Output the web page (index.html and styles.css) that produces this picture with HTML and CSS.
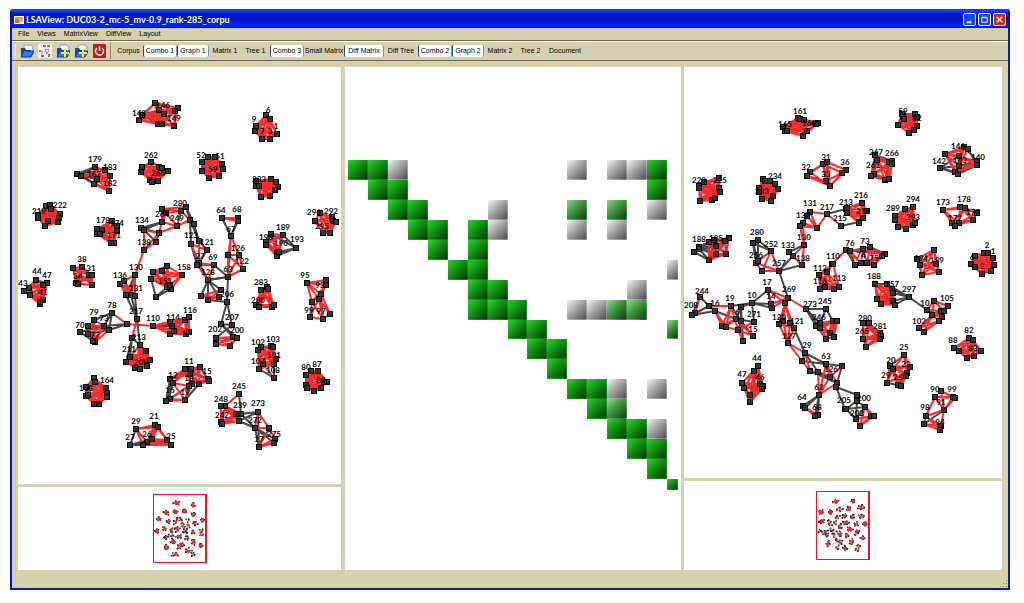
FILE: index.html
```
<!DOCTYPE html>
<html lang="en">
<head>
<meta charset="utf-8">
<meta name="viewport" content="width=device-width, initial-scale=1">
<title>LSAView</title>
<link rel="stylesheet" href="styles.css">
</head>
<body>
<svg class="defs" aria-hidden="true">
  <symbol id="folder" viewBox="0 0 14 14">
    <path d="M4 1h7l2 2v6H4z" fill="#f4f8ff" stroke="#8a9cc0" stroke-width="1"/>
    <path d="M1 4h4l1 2h5v7H1z" fill="#1248b0"/>
    <path d="M1 13l3-6h10l-3 6z" fill="#2f7cf0" stroke="#0a3594" stroke-width="1"/>
  </symbol>
  <symbol id="plus" viewBox="0 0 14 14">
    <path d="M9 5v8M5 9h8" stroke="#ffee00" stroke-width="2"/>
  </symbol>
</svg>
<div class="window">
  <header class="titlebar">
    <svg class="app-icon" viewBox="0 0 10 8" aria-hidden="true"><path d="M0 0h10v8H0z" fill="#fff"/><path d="M1 1h8v2H1z" fill="#ff9a2a"/><path d="M1 3h4v4H1z" fill="#e8641a"/><path d="M5 3h4v3H5z" fill="#f7b46a"/></svg>
    <h1 class="title">LSAView: DUC03-2_mc-5_mv-0.9_rank-285_corpu</h1>
    <div class="controls">
      <button class="control" aria-label="Minimize"><svg viewBox="0 0 12 12"><path d="M3 8h5v2H3z" fill="#fff"/></svg></button>
      <button class="control" aria-label="Maximize"><svg viewBox="0 0 12 12"><path d="M3 4h6v5H3z" fill="none" stroke="#fff"/><path d="M3 3h6v1H3z" fill="#fff"/></svg></button>
      <button class="control close" aria-label="Close"><svg viewBox="0 0 12 12"><path d="M3 3l6 6M9 3l-6 6" stroke="#fff" stroke-width="1.5"/></svg></button>
    </div>
  </header>
  <nav class="menubar" aria-label="Menu">
    <button class="menu">File</button><button class="menu">Views</button><button class="menu">MatrixView</button><button class="menu">DiffView</button><button class="menu">Layout</button>
  </nav>
  <div class="toolbar" role="toolbar" aria-label="Tools">
    <span class="grip"></span>
    <button class="tool" aria-label="Open"><svg viewBox="0 0 14 14"><use href="#folder"/></svg></button>
    <button class="tool" aria-label="Graph"><svg viewBox="0 0 14 14"><path d="M0 0h14v14H0z" fill="#f4f2ea"/><path d="M5 1h3v2H5zM9 1h3v2H9zM1 6h2v2H1zM3 11h3v2H3zM10 10h2v3h-2z" fill="#777"/><path d="M7 5l4 1-2 4zM4 7v4" fill="none" stroke="#e06a70"/></svg></button>
    <button class="tool" aria-label="Add corpus"><svg viewBox="0 0 14 14"><use href="#folder"/><use href="#plus"/></svg></button>
    <button class="tool" aria-label="Add matrix"><svg viewBox="0 0 14 14"><use href="#folder"/><use href="#plus"/></svg></button>
    <button class="tool" aria-label="Exit"><svg viewBox="0 0 14 14"><rect x="1" y="0" width="13" height="14" rx="1" fill="#c4161c"/><path d="M5 4a4 4 0 1 0 5 0" fill="none" stroke="#fff" stroke-width="1.5"/><path d="M7.500 2v5" stroke="#fff" stroke-width="1.5"/></svg></button>
    <span class="divider"></span>
    <button class="toggle xs">Corpus</button>
    <button class="toggle md on">Combo 1</button>
    <button class="toggle sm on">Graph 1</button>
    <button class="toggle sm">Matrix 1</button>
    <button class="toggle xs">Tree 1</button>
    <button class="toggle md on">Combo 3</button>
    <button class="toggle lg">Small Matrix</button>
    <button class="toggle lg on">Diff Matrix</button>
    <button class="toggle md">Diff Tree</button>
    <button class="toggle md on">Combo 2</button>
    <button class="toggle sm on">Graph 2</button>
    <button class="toggle sm">Matrix 2</button>
    <button class="toggle xs">Tree 2</button>
    <button class="toggle lg">Document</button>
  </div>
  <main class="workspace">
    <section class="column column-first" aria-label="Graph 1">
      <div class="pane"><svg class="graph" id="graph1" viewBox="0 0 323 417"></svg></div>
      <div class="pane overview"><svg class="minimap" id="map1" viewBox="0 0 323 417" preserveAspectRatio="none"></svg></div>
    </section>
    <section class="pane matrix-pane" aria-label="Diff Matrix"><div class="matrix" id="matrix"></div></section>
    <section class="column column-last" aria-label="Graph 2">
      <div class="pane"><svg class="graph" id="graph2" viewBox="0 0 318 411"></svg></div>
      <div class="pane overview"><svg class="minimap" id="map2" viewBox="0 0 318 411" preserveAspectRatio="none"></svg></div>
    </section>
  </main>
  <footer class="statusbar"><svg class="resize" viewBox="0 0 9 9" aria-hidden="true"><path d="M7 1h1v1H7zM4 4h1v1H4zM7 4h1v1H7zM1 7h1v1H1zM4 7h1v1H4zM7 7h1v1H7z" fill="#8f8a6c"/></svg></footer>
</div>
<script src="graph.js"></script>
</body>
</html>
```
FILE: styles.css
```
* { box-sizing: border-box; }
body {
  margin: 0;
  height: 100vh;
  padding: 9px 14px 13px 10px;
  background: #fff;
  color: #000;
  font-family: "Liberation Sans", Arial, sans-serif;
  font-size: 7px;
  line-height: 10px;
}
button { margin: 0; padding: 0; border: 0; background: none; color: inherit; font: inherit; white-space: nowrap; }
.defs { position: absolute; width: 0; height: 0; }
.window {
  display: flex;
  flex-direction: column;
  height: 100%;
  min-height: 400px;
  border: 2px solid #0b16b8;
  border-top: 0;
  border-radius: 3px 3px 0 0;
  background: #d6d0ae;
  overflow: hidden;
}
.titlebar {
  display: flex;
  align-items: center;
  gap: 2px;
  height: 19px;
  padding: 2px 2px 0;
  background: linear-gradient(#0a3fd8 0, #0a4cf0 2px, #0016c0 5px, #0018d0 11px, #0028ff 17px, #0010a0 19px);
}
.app-icon { width: 10px; height: 8px; }
.title { flex: 1; margin: 0; color: #fff; font-family: Lato, "Liberation Sans", sans-serif; font-size: 9px; line-height: 12px; font-weight: bold; white-space: nowrap; overflow: hidden; }
.controls { display: flex; gap: 2px; }
.control { width: 13px; height: 13px; border: 1px solid #fff; border-radius: 2px; background: #1c46e0; }
.control svg { display: block; width: 11px; height: 11px; }
.close { background: #d02a14; }
.menubar { display: flex; align-items: center; gap: 8px; height: 13px; padding: 0 6px; border-bottom: 1px solid #6c6653; }
.toolbar {
  display: flex;
  align-items: center;
  height: 20px;
  padding-left: 3px;
  border-top: 1px solid #fff;
  border-bottom: 1px solid #6c6653;
}
.grip { width: 2px; height: 14px; margin-right: 3px; border-left: 1px dotted #fff; }
.tool { width: 14px; height: 14px; margin-right: 4px; }
.tool svg { display: block; width: 14px; height: 14px; }
.divider { width: 1px; height: 16px; margin-right: 3px; background: #8f8a6c; }
.toggle { height: 12px; border-radius: 2px; overflow: hidden; }
.on { background: #fff; border-left: 1px solid #1d4f80; border-right: 1px solid #6f93b5; }
.xs { width: 29px; }
.sm { width: 32px; }
.md { width: 34px; }
.lg { width: 40px; }
.workspace {
  flex: 1;
  min-height: 0;
  display: grid;
  grid-template-columns: 323fr 337fr 318fr;
  gap: 3px;
  padding: 6px 6px 0;
}
.column { display: grid; gap: 3px; min-height: 0; min-width: 0; }
.column-first { grid-template-rows: 417fr 83fr; }
.column-last { grid-template-rows: 411fr 89fr; }
.pane { min-width: 0; min-height: 0; background: #fff; overflow: hidden; }
.graph { display: block; width: 100%; height: 100%; }
.overview { display: flex; align-items: center; justify-content: center; }
.minimap { width: 54px; height: 69px; border: 1px solid #f01030; border-right-width: 2px; }
.minimap .node { stroke-width: 4; }
.edge-strong { fill: none; stroke: #ff2a2a; stroke-width: 2; }
.edge-weak { fill: none; stroke: #484848; stroke-width: 2; }
.node { fill: #363636; stroke: #000; stroke-width: 1; }
.label { fill: #000; font: bold 8px Lato, "Liberation Sans", sans-serif; text-anchor: middle; }
.matrix-pane { margin-left: 1px; padding: 93px 3px 0; }
.matrix {
  display: grid;
  grid-template-columns: repeat(16, 20fr) 11fr;
  grid-template-rows: repeat(16, 20fr) 11fr;
  aspect-ratio: 1;
}
.cell { min-width: 0; min-height: 0; border-right: 1px solid #0003; border-bottom: 1px solid #0003; }
.strong { background: linear-gradient(135deg, #25d525, #18a018 35%, #073a07); }
.medium { background: linear-gradient(135deg, #90dc90, #3f983f 45%, #104010); }
.weak { background: linear-gradient(135deg, #f4f4f4, #a8a8a8 45%, #505050); }
.statusbar { display: flex; justify-content: flex-end; align-items: flex-end; height: 18px; }
.resize { width: 9px; height: 9px; }
```
FILE: graph.js
```
// Each cluster: nodes | strong links | weak links | labels.
// "*" links every pair, "*a-b" links every pair in that index range.
// Coordinates are thirds of a pixel from the origin of the cluster's quadrant.
const firstGraph = [
  [0, 0, [
    "417,111 485,126 477,135 429,132 377,147 369,162 444,143 426,173 439,174 475,181|*|5-6 4-7 5-8 4-3|146@442,117 149@474,157 148@368,142",
    "237,302 182,324 196,330 268,312 283,329 243,339 233,354 279,375|*|1-0 1-6 2-5 2-6 1-2 2-0 1-5 1-7 1-3 1-4 2-7|179@237,278 183@281,303 167@234,323 182@281,352",
    "404,289 379,303 374,317 430,302 439,305 456,315 401,343 408,348 427,346|*||262@404,267 266@427,322",
    "89,419 102,417 105,429 66,447 66,455 132,443 129,455 126,468 97,465 87,481|*||222@131,418 219@68,436",
    "288,465 303,481 303,494 242,489 258,493 243,503 252,503 285,530 294,531|*||178@260,461 174@302,470 171@293,508",
    "375,486 383,492 429,501 420,529 384,552 437,429 450,440 439,469 482,481 494,434 510,423 521,462 535,473 357,627|1-4 1-2 4-2 4-3 7-5 5-10 6-9 7-8 8-11 5-9 6-8 7-6 7-2 8-9 2-8 9-11 4-13|0-7 0-2 1-3 2-3 1-7 10-11 10-12|134@377,462 138@384,528 280@492,411 264@439,445 249@482,457"
  ]],
  [492, 0, [
    "258,147 271,159 227,180 224,196 291,203 246,218 271,218|*||6@265,133 9@223,160 7@247,195 3@271,195 1@289,181",
    "84,272 106,272 66,288 126,294 130,308 66,316 88,336 117,330|*||52@63,267 51@121,269 59@99,308",
    "229,346 272,340 228,360 237,360 287,347 293,363 286,372 243,393 271,390|*||233@236,338",
    "404,464 421,440 455,452 458,464 468,468 430,502 450,500|*||296@402,439 292@452,435 295@426,479",
    "273,504 308,507 257,527 257,537 290,562 291,570 298,557 349,545|*0-6|1-7 4-7 5-7 6-7 0-7|189@308,483 193@350,520 198@257,514 190@302,532",
    "127,456 174,456 174,466 154,510 144,567 176,567 189,608 145,632|0-1 0-2 3-4 3-5 4-7 3-7 4-5 5-6 4-6 6-7 5-7|0-3 2-3 1-3|64@124,433 68@171,430 67@154,488 126@173,547 122@185,584",
    "29,462 43,473 34,533 57,524 81,551 57,590 50,597 102,597 84,642 145,632|2-4 3-5 2-5 4-6 6-7 7-8 5-7 6-8|0-2 1-3 0-3 2-6 7-9 5-8 3-4 4-5 8-9|123@34,508 121@81,527 69@100,574 27@60,570 128@84,618"
  ]],
  [0, 582, [
    "61,59 93,69 80,74 39,84 23,92 41,106 72,132 80,119 72,125|*||44@62,34 47@93,46 43@21,69 41@81,95",
    "171,23 198,21 219,45 229,46 180,69 186,72 229,76|*||38@197,-3 31@226,23 34@187,47",
    "357,45 323,64 311,73 330,104 346,106 358,107 363,178|0-1 0-5 1-3 2-3 1-4 2-5 0-4 1-5|3-6 4-6 5-6 0-3|130@359,21 136@313,46 131@359,84 217@361,154",
    "288,158 233,180 217,199 192,217 215,221 265,198 279,209 333,193 237,247 231,243|0-7 1-5 1-4 2-8 4-8 5-8 6-8 2-5 5-9 1-9 2-9 1-8 4-5|0-1 0-6 5-7 6-7 3-9 3-5 2-6 0-5 4-6|78@289,135 79@233,156 70@193,194 73@264,173 77@237,225",
    "410,198 462,185 468,199 461,222 474,213 506,180 520,172 510,222 520,216 333,193|*0-8 0-9|0-1 0-2|110@411,173 114@471,171 116@521,149",
    "372,254 390,274 402,299 393,319 372,328 356,324 329,306 341,291 348,234 363,178|*0-7 8-9|8-0 8-7 8-6 0-9|213@370,230 211@339,267 209@375,305",
    "233,353 237,366 211,380 270,383 274,400 273,412 209,409 216,406 233,432 249,432|*||164@272,359 168@211,384",
    "360,506 416,495 427,501 453,540 466,555 407,536 393,547 381,556 342,556|0-1 0-2 0-7 0-6 2-4 2-3 5-4 1-5 2-6 1-6 3-5 3-6 4-6 4-7 3-7 6-7 1-3 2-5 5-7|8-0 8-6 8-5 8-7|21@413,468 29@359,482 26@393,523 25@465,529 27@342,532",
    "461,356 471,370 461,416 451,423 506,327 525,327 552,321 576,357 580,362 549,372 529,372 518,379 507,421 522,342|0-4 1-4 1-5 0-13 1-11 1-12 2-12 3-12 4-10 5-9 6-10 6-9 6-13 4-6 7-9 8-9 7-10 11-13 10-12 3-11 0-6 0-5 4-9 13-9 11-12 7-13|0-3 0-2 6-8 1-3 4-7 12-9 2-11|12@472,345 16@461,389 11@520,304 15@574,332 18@518,353 19@507,396",
    "411,36 438,33 453,18 405,57 466,88 453,82 462,75 499,45 420,112|*0-7|3-8 4-8 5-8|158@504,20 152@446,62"
  ]],
  [492, 582, [
    "84,60 145,51 63,108 84,120 117,110 123,91 141,126|2-4 2-5 3-5 4-3|0-1 0-2 0-3 0-4 0-5 3-6 1-6|63@143,26 206@141,102",
    "141,126 124,193 156,194 109,233 109,253 149,259 159,232 172,234|*3-7|0-1 0-2 1-2 1-6 2-3 1-7|207@156,170 202@105,208 200@171,211",
    "243,90 261,81 264,87 228,135 236,140 277,141 282,135|*||283@242,66 280@233,119",
    "381,69 438,60 438,75 423,102 417,117 396,126 450,162 428,177 390,172|0-1 0-2 0-3 0-5 2-4 3-5 2-5 5-8 5-7 4-7 4-6 3-7 3-6 8-7 7-6 8-3 0-4||95@376,44 92@420,75 99@388,150 97@424,154",
    "243,261 234,270 272,258 280,261 288,297 249,312 236,327 282,312 281,354|*0-7 5-8|6-8 7-8|103@280,238 102@233,247 101@281,284 107@235,304 108@280,329",
    "392,334 414,334 377,345 441,366 431,366 377,375 380,384 401,393 423,384|*||87@411,311 80@377,322 88@423,360",
    "178,402 135,437 124,439 124,486 126,492 168,461 182,461 176,482 234,456 225,505 267,505 285,537 282,549 237,561|*1-7 0-1 8-9 8-10 9-10 10-13 12-13 11-13 10-11|0-6 5-8 6-8 7-8 6-9 7-9 9-13 9-12 8-13 9-11|245@176,378 248@124,416 239@181,435 242@126,466 273@233,430 272@224,481 275@281,521 17@236,537"
  ]]
];
const secondGraph = [
  [0, 0, [
    "341,157 348,158 361,161 402,172 396,173 297,184 302,195 308,195 369,195 358,211|*||161@347,135 165@303,173 160@374,171",
    "418,294 430,289 379,318 369,330 486,312 475,322 426,346 439,360|0-2 1-4 0-6 1-7 1-6 2-7 3-6 3-0 5-6 5-7 4-7 0-5 0-7 3-7||31@427,272 32@367,304 33@425,323 36@484,287",
    "60,347 104,335 46,360 46,366 106,366 107,379 48,404 83,402 94,397|*||228@46,343 225@108,342",
    "237,338 257,345 274,353 283,369 225,366 225,378 234,399 267,390 262,405 243,345|*||234@273,330 233@235,375",
    "378,437 370,450 357,471 349,480 400,487 430,444 470,480 486,428 360,537 354,597 328,569 316,559 285,615 234,614 216,591 222,584 208,532 222,523 262,555 525,469|0-4 0-5 2-4 1-4 5-4 3-4 0-2 5-6 2-8 3-8 8-9 8-10 10-9 0-3 14-13 13-12 18-14 15-18 12-18 13-18 14-12|5-7 6-19 8-11 10-11 10-12 9-12 16-14 17-15 17-18 16-18 16-15 11-9|131@377,412 137@357,447 217@428,423 215@467,457 130@361,512 133@313,537 138@356,575 280@220,499 252@262,535 256@215,568 257@284,591",
    "30,559 45,544 45,550 75,583 75,527 90,521 134,517 122,525 96,540 96,564 126,564|*3-10|0-1 0-3 0-4 1-8 2-9 1-4 2-3 0-8 1-9|188@44,519 185@96,517"
  ]],
  [480, 0, [
    "173,144 176,152 212,143 219,154 162,177 180,160 219,180 209,193 195,201|*||59@176,136 82@218,155",
    "93,267 98,282 136,288 144,286 144,294 89,324 80,329 122,343 136,338|*|0-3 1-2|267@96,257 266@145,260 261@86,297",
    "302,263 359,243 372,250 400,285 399,297 288,307 333,318 341,323 344,301 345,270|0-1 0-8 0-9 0-6 0-7 1-9 2-8 1-8 6-8 7-8 7-9 4-8 6-4 0-3 9-4 8-9 6-3 0-2|1-3 2-4 5-6 5-9 5-7 4-7 3-8 5-8 3-7|146@341,240 142@286,285 143@347,281 140@401,273",
    "54,411 8,426 8,440 57,456 44,470 68,435|*||216@52,387 213@6,407 218@57,434",
    "206,423 182,428 152,450 152,463 162,483 186,489 206,478 213,470|*||294@206,399 289@148,427 293@206,454",
    "297,431 348,423 362,425 398,440 386,462 344,470 324,471 332,480|0-1 0-2 0-5 0-6 0-7 1-3 1-4 2-3 2-4 3-4 4-5 4-7 3-5 2-6 1-5 5-6 2-7 3-7||178@361,399 173@296,408 177@386,438 172@332,457",
    "5,552 17,554 57,548 79,543 123,564 113,570 32,597 50,591 90,598 69,592 -35,594|*5-9 1-2 2-4 3-5 3-8 2-7 4-8 2-9 3-9 0-7 1-7 0-10|1-3 0-6 1-6 0-4 3-4|76@19,532 73@63,525 74@50,568 75@90,575",
    "270,552 219,580 228,597 233,627 285,618 276,594|*||194@232,576 189@280,582",
    "420,560 432,560 393,571 382,595 446,577 450,597 392,603 441,615 414,625|*||2@428,537 1@447,554 6@384,573 3@414,600"
  ]],
  [0, 582, [
    "48,111 33,160 24,165 76,138 92,152 141,139 204,129 252,89 261,131 264,144 313,113 304,129 114,198 126,201 156,178 172,184 210,186 163,210 178,243 208,229 172,140 366,147 285,33|0-1 0-2 3-5 5-13 5-17 4-12 4-13 7-10 8-10 9-10 7-11 10-21 5-12 12-17 12-14 13-14 17-18 17-19 16-17 14-19 7-8|2-3 2-4 3-4 4-14 5-6 6-7 6-9 6-8 6-20 20-15 20-14 20-18 5-15 14-16 15-19 7-9 0-3 6-16 15-17 15-18 10-22|244@55,92 208@22,136 16@94,128 19@139,114 10@205,104 17@250,65 14@262,107 269@314,87 271@211,161 6@160,156 15@208,206 273@378,133",
    "304,129 296,183 284,193 317,188 330,204 313,249 363,280 355,303|0-2 0-3 0-4 1-4 1-5 2-5 3-5 5-7 0-1 4-5 2-4 5-6|4-6 6-7|120@286,170 121@338,182 127@314,227 29@369,256",
    "366,147 425,147 396,198 409,203 408,190 447,183 460,184 438,219 426,237 450,231|*2-9|0-1 0-2 1-4 0-4 1-5 0-3|245@422,124 246@405,170",
    "446,12 405,44 429,35 407,88 423,82 450,88 466,81|*1-6 0-1 0-6|0-2|110@446,-12 112@408,23 116@407,63 113@466,55",
    "363,280 378,333 402,336 426,312 475,318 438,351 459,369 405,405 357,438 363,445 402,465 394,468 482,446 456,380 355,303 518,405|14-1 0-1 1-2 3-5 3-7 5-7 2-7 3-6 5-4 6-7 8-11 9-10 8-10|14-3 0-2 0-3 3-4 2-5 2-6 4-6 1-6 7-8 7-9 7-10 7-11 13-12 1-5 13-15|63@425,288 126@440,327 62@404,380 64@355,412 68@400,441 205@479,420",
    "222,318 210,333 174,369 179,385 228,373 237,379 234,387 199,405 199,426|*||44@220,294 47@173,342 46@227,350"
  ]],
  [480, 582, [
    "92,73 130,73 145,88 100,116 111,132 148,124 154,135 146,98 194,111 248,150|*0-7|0-1 1-8 2-8 5-8 6-8 7-8 8-9|188@89,48 157@145,73 297@194,87",
    "270,124 312,139 248,150 263,165 290,154 301,153 294,172 284,183 226,204 240,216|0-1 0-2 0-5 1-3 1-4 2-3 2-5 3-4 3-6 3-7 3-8 7-8 7-9 6-9 4-8 0-3 2-6 4-7 3-9 2-4||105@309,115 10@244,128 102@225,182",
    "56,190 75,190 107,219 110,227 107,237 56,237 66,261|*||280@64,173 281@108,199 265@54,213",
    "375,234 386,240 330,264 344,273 410,272 390,288 369,295|*||82@375,210 88@328,239 83@386,264",
    "181,284 137,318 147,327 198,321 188,339 187,347 128,370 162,375 172,378|0-1 0-2 0-3 0-4 1-3 2-3 2-4 1-7 2-6 1-6 4-7 5-8 4-8 3-7 2-8 1-5 4-6 5-7|6-7|25@180,260 20@140,299 23@186,311 29@125,344 28@161,352",
    "38,423 5,446 62,440 36,477 49,498 81,468 90,467|*2-6|0-1 0-2 0-3 1-2 1-3 2-3|200@60,415 202@38,458",
    "292,393 273,411 328,411 334,415 300,450 246,467 241,492 292,497 288,511|1-2 0-2 1-5 1-4 2-4 3-4 0-4 4-7 5-7 6-7 6-8 5-6 4-5 4-8 1-3 5-8|4-6|90@272,387 99@324,387 91@290,426 98@243,441 94@288,485"
  ]]
];

function links(spec) {
  const out = [];
  spec.split(" ").filter(Boolean).forEach(s => {
    const [a, b] = s.replace("*", "").split("-").map(Number);
    if (!s.startsWith("*")) { out.push([a, b]); return; }
    for (let i = a; i < b; i++) for (let j = i + 1; j <= b; j++) out.push([i, j]);
  });
  return out;
}

function drawGraph(quadrants, graphId, mapId, left) {
  let edges = "", squares = "", labels = "";
  for (const [ox, oy, clusters] of quadrants) {
    const place = (p) => {
      const [x, y] = p.split(",").map(Number);
      return [Math.round((x + ox) / 3) - left, Math.round((y + oy) / 3) - 1];
    };
    for (const cluster of clusters) {
      const [n, strong, weak, names] = cluster.split("|");
      const pts = n.split(" ").map(place);
      const weakLinks = links(weak);
      const isWeak = new Set(weakLinks.map(l => l.slice().sort((a, b) => a - b).join()));
      const all = strong === "*" ? "*0-" + (pts.length - 1) : strong;
      const path = list => list.map(([a, b]) => "M" + pts[a] + "L" + pts[b]).join("");
      edges += `<path class="edge-weak" d="${path(weakLinks)}"/>`;
      edges += `<path class="edge-strong" d="${path(links(all).filter(l => !isWeak.has(l.join())))}"/>`;
      pts.forEach(([x, y]) => { squares += `<rect class="node" x="${x - 2.5}" y="${y - 2.5}" width="5" height="5"/>`; });
      names.split(" ").filter(Boolean).forEach(s => {
        const [name, at] = s.split("@");
        const [x, y] = place(at);
        labels += `<text class="label" x="${x}" y="${y + 3}">${name}</text>`;
      });
    }
  }
  document.getElementById(graphId).innerHTML = edges + squares + labels;
  document.getElementById(mapId).innerHTML = squares + edges;
}
drawGraph(firstGraph, "graph1", "map1", 2);
drawGraph(secondGraph, "graph2", "map2", 0);

// Column index followed by the strength of the difference.
const rows = [
  "0s 1s 2w 11w 13w 14w 15s", "1s 2s 15s", "2s 3s 7w 11m 13m 15w", "3s 4s 6s 7w 11w 13w",
  "4s 6s", "5s 6s 16w", "6s 7s 14w", "6s 7s 8s 11w 12w 13m 14m", "8s 9s 16m", "9s 10s", "10s",
  "11s 12s 13w 15w", "12s 13m", "13s 14s 15w", "14s 15s", "15s", "16s"
];
const strengths = { s: "strong", m: "medium", w: "weak" };
document.getElementById("matrix").innerHTML = rows.map((row, r) => row.split(" ").map(c =>
  `<div class="cell ${strengths[c.slice(-1)]}" style="grid-area:${r + 1}/${parseInt(c, 10) + 1}"></div>`).join("")).join("");
```
